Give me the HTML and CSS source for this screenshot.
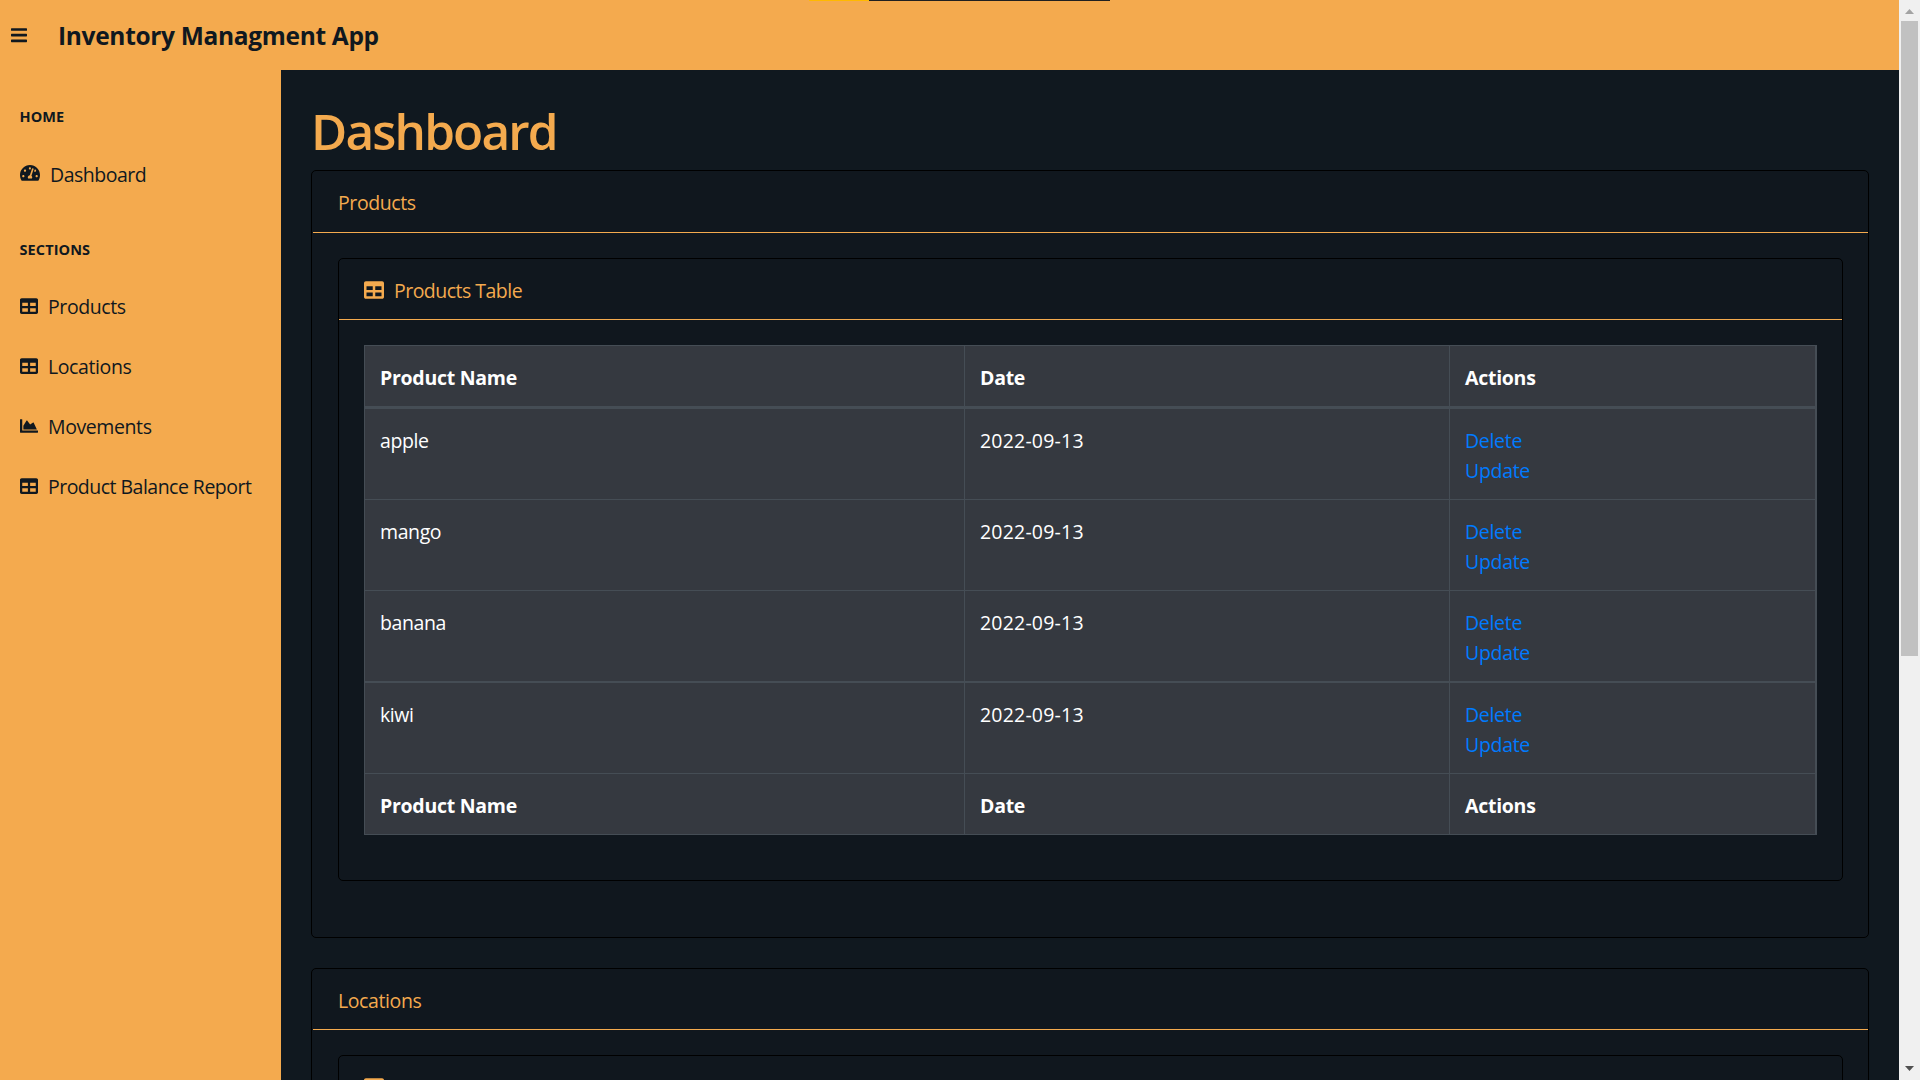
FILE: index.html
```html
<!DOCTYPE html>
<html lang="en">
<head>
<meta charset="utf-8">
<title>Inventory Managment App</title>
<link rel="stylesheet" href="styles.css">
</head>
<body>
<svg class="defs" aria-hidden="true">
  <symbol id="table" viewBox="0 0 512 512"><path d="M464 32H48C21.49 32 0 53.49 0 80v352c0 26.51 21.49 48 48 48h416c26.51 0 48-21.49 48-48V80c0-26.51-21.49-48-48-48zM224 416H64v-96h160v96zm0-160H64v-96h160v96zm224 160H288v-96h160v96zm0-160H288v-96h160v96z"/></symbol>
  <symbol id="area" viewBox="0 0 512 512"><path d="M500 384c6.6 0 12 5.4 12 12v40c0 6.6-5.4 12-12 12H12c-6.6 0-12-5.4-12-12V76c0-6.6 5.4-12 12-12h40c6.6 0 12 5.4 12 12v308h436zM372.7 159.5L288 216l-85.3-113.7c-5.1-6.8-15.5-6.3-19.9 1L96 248v104h384l-89.9-187.8c-3.2-6.5-11.4-8.7-17.4-4.7z"/></symbol>
  <symbol id="gauge" viewBox="0 0 576 512"><path d="M288 32C128.94 32 0 160.94 0 320c0 52.8 14.25 102.26 39.06 144.8 5.61 9.62 16.3 15.2 27.44 15.2h443c11.14 0 21.83-5.58 27.44-15.2C561.75 422.26 576 372.8 576 320c0-159.06-128.94-288-288-288zm0 64c14.71 0 26.58 10.13 30.32 23.65-1.11 2.26-2.64 4.23-3.45 6.67l-9.22 27.67c-5.13 3.49-10.97 6.01-17.64 6.01-17.67 0-32-14.33-32-32S270.33 96 288 96zM96 384c-17.67 0-32-14.33-32-32s14.33-32 32-32 32 14.33 32 32-14.33 32-32 32zm48-160c-17.67 0-32-14.33-32-32s14.33-32 32-32 32 14.33 32 32-14.33 32-32 32zm246.77-72.41l-61.33 184C343.13 347.33 352 364.54 352 384c0 11.72-3.38 22.55-8.88 32H232.88c-5.5-9.45-8.88-20.28-8.88-32 0-33.94 26.5-61.43 59.9-63.59l61.34-184.01c4.17-12.56 17.73-19.45 30.36-15.17 12.57 4.19 19.35 17.79 15.17 30.36zm14.66 57.2l15.52-46.55c3.47-1.29 7.13-2.23 11.05-2.23 17.67 0 32 14.33 32 32s-14.33 32-32 32c-11.38-.01-20.89-6.28-26.57-15.22zM480 384c-17.67 0-32-14.33-32-32s14.33-32 32-32 32 14.33 32 32-14.33 32-32 32z"/></symbol>
  <symbol id="bars" viewBox="0 0 448 512"><path d="M16 132h416c8.8 0 16-7.2 16-16V76c0-8.8-7.2-16-16-16H16C7.2 60 0 67.2 0 76v40c0 8.8 7.2 16 16 16zm0 160h416c8.8 0 16-7.2 16-16v-40c0-8.8-7.2-16-16-16H16c-8.8 0-16 7.2-16 16v40c0 8.8 7.2 16 16 16zm0 160h416c8.8 0 16-7.2 16-16v-40c0-8.8-7.2-16-16-16H16c-8.8 0-16 7.2-16 16v40c0 8.8 7.2 16 16 16z"/></symbol>
</svg>
<div class="window">
  <div class="app">
    <header class="topbar">
      <svg class="menu-icon"><use href="#bars"/></svg>
      <div class="brand">Inventory Managment App</div>
    </header>
    <div class="layout">
      <nav class="sidebar">
        <div class="nav-heading">HOME</div>
        <a class="nav-link first"><svg class="icon wide"><use href="#gauge"/></svg><span>Dashboard</span></a>
        <div class="nav-heading sections">SECTIONS</div>
        <a class="nav-link"><svg class="icon"><use href="#table"/></svg><span>Products</span></a>
        <a class="nav-link"><svg class="icon"><use href="#table"/></svg><span>Locations</span></a>
        <a class="nav-link"><svg class="icon"><use href="#area"/></svg><span>Movements</span></a>
        <a class="nav-link"><svg class="icon"><use href="#table"/></svg><span class="tight">Product Balance Report</span></a>
      </nav>
      <main class="content">
        <h1 class="title">Dashboard</h1>
        <section class="card outer products">
          <div class="card-header">Products</div>
          <div class="card inner">
            <div class="card-header"><svg class="icon-lg"><use href="#table"/></svg><span class="tight">Products Table</span></div>
            <table class="data">
              <colgroup><col class="c1"><col class="c2"><col class="c3"></colgroup>
              <thead><tr><th>Product Name</th><th>Date</th><th>Actions</th></tr></thead>
              <tbody>
                <tr class="row-first"><td>apple</td><td class="date">2022-09-13</td><td class="actions"><a>Delete</a><br><a>Update</a></td></tr>
                <tr><td>mango</td><td class="date">2022-09-13</td><td class="actions"><a>Delete</a><br><a>Update</a></td></tr>
                <tr><td>banana</td><td class="date">2022-09-13</td><td class="actions"><a>Delete</a><br><a>Update</a></td></tr>
                <tr class="row-last"><td>kiwi</td><td class="date">2022-09-13</td><td class="actions"><a>Delete</a><br><a>Update</a></td></tr>
              </tbody>
              <tfoot><tr><th>Product Name</th><th>Date</th><th>Actions</th></tr></tfoot>
            </table>
          </div>
        </section>
        <section class="card outer">
          <div class="card-header">Locations</div>
          <div class="card inner">
            <div class="card-header"><svg class="icon-lg"><use href="#table"/></svg></div>
          </div>
        </section>
      </main>
    </div>
  </div>
  <div class="scrollbar">
    <svg class="arrow up" viewBox="0 0 9 5"><path d="M4.5 0L9 5H0z"/></svg>
    <div class="thumb"></div>
    <svg class="arrow down" viewBox="0 0 9 5"><path d="M0 0h9L4.5 5z"/></svg>
  </div>
</div>
<div class="strip"></div>
</body>
</html>
```
FILE: styles.css
```css
* { box-sizing: border-box; }
body {
  margin: 0;
  height: 1080px;
  overflow: hidden;
  font: 19.5px/30px "Open Sans", "Noto Sans", sans-serif;
  letter-spacing: -.4px;
  color: #10181f;
  background: #10181f;
}
.defs { display: none; }
svg { fill: currentColor; flex: none; display: block; }
.window { display: flex; height: 1080px; }
.app { flex: 1; display: flex; flex-direction: column; min-width: 0; }
.topbar {
  flex: none;
  height: 70px;
  padding: 0 0 0 11px;
  display: flex;
  background: #f4aa4e;
}
.menu-icon { width: 16px; height: 18.3px; margin-top: 26px; }
.brand { margin: 21px 0 0 31px; font-size: 24.5px; font-weight: 700; letter-spacing: -.32px; }
.layout { flex: 1; display: flex; min-height: 0; }
.sidebar { flex: none; width: 281px; background: #f4aa4e; padding-top: 35px; }
.nav-heading {
  padding-left: 19.5px;
  height: 23px;
  font-size: 14.5px;
  line-height: 23px;
  font-weight: 700;
  letter-spacing: .1px;
}
.nav-heading.sections { margin-top: 34px; }
.nav-link { display: flex; align-items: center; height: 60px; padding-left: 20px; gap: 10px; white-space: nowrap; }
.nav-link span { padding-top: 2px; }
.nav-link.first { margin-top: 16px; letter-spacing: -.5px; }
.nav-heading.sections + .nav-link { margin-top: 15px; }
.icon { width: 18px; height: 18px; margin-top: -1px; }
.icon.wide { width: 20px; height: 17.8px; margin-top: -2px; }
.tight { letter-spacing: -.52px; }
.content { flex: 1; padding: 31px 30px 0; color: #f4aa4e; overflow: hidden; }
.title { margin: 0 0 9px; font-size: 49.5px; line-height: 60px; font-weight: 600; letter-spacing: -1.85px; }
.card { border: 1px solid #000; border-radius: 5px; background: #10171e; }
.outer { margin-bottom: 30px; padding-bottom: 56px; }
.card-header {
  display: flex;
  height: 61px;
  padding: 17px 25px 0;
  border-bottom: 1px solid #f4aa4e;
}
.outer > .card-header { margin-left: 1px; }
.products > .card-header { height: 62px; }
.inner { margin: 25px 25px 0 26px; padding-bottom: 45px; }
.icon-lg { width: 20px; height: 20px; margin: 4px 10px 0 0; }
.data {
  width: 1453px;
  margin: 25px 0 0 25px;
  table-layout: fixed;
  border-spacing: 0;
  border: solid #454d55;
  border-width: 0 2px 1px 0;
  background: #353940;
  color: #fff;
}
.c1 { width: 600px; }
.c2 { width: 485px; }
.data th, .data td {
  height: 91px;
  padding: 17px 15px 0;
  border: solid #454d55;
  border-width: 1px 0 0 1px;
  text-align: left;
  vertical-align: top;
}
.data th { height: 61px; font-weight: 700; letter-spacing: -.27px; }
.data .row-first td { height: 93px; border-top-width: 3px; }
.data .row-last td { height: 92px; border-top-width: 2px; }
.data .date { letter-spacing: .2px; }
.data .actions { letter-spacing: -.3px; }
.data a { color: #007bff; }
.scrollbar {
  flex: none;
  width: 21px;
  padding: 9px 2px 7px;
  background: #f0f0f0;
  display: flex;
  flex-direction: column;
  align-items: center;
}
.arrow { width: 9px; height: 5px; }
.up { fill: #a3a3a3; }
.down { fill: #505050; margin-top: auto; margin-bottom: 2px; }
.thumb { width: 17px; height: 635px; margin-top: 7px; background: #c1c1c1; }
.strip {
  position: absolute;
  top: 0;
  left: 809px;
  width: 301px;
  height: 1px;
  background: linear-gradient(90deg, #ffb900 60px, #202020 60px);
}
```
